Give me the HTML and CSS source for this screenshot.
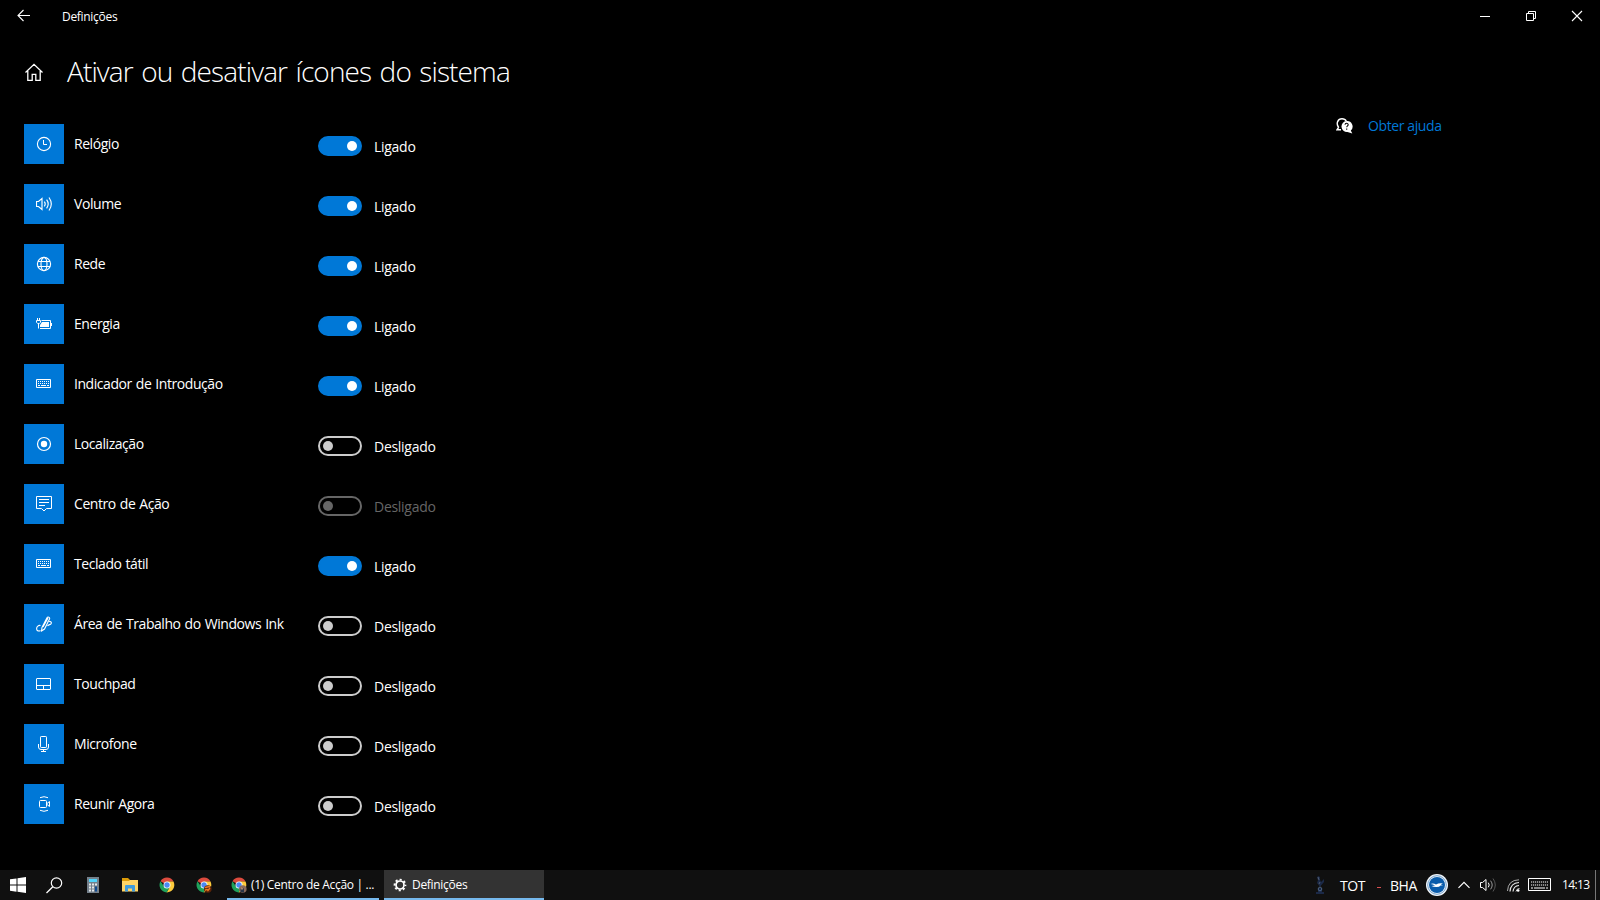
FILE: index.html
```html
<!DOCTYPE html>
<html lang="pt">
<head>
<meta charset="utf-8">
<title>Definições</title>
<link rel="stylesheet" href="styles.css">
</head>
<body>
<svg class="defs" width="0" height="0">
  <symbol id="keyboard" viewBox="0 0 16 16"><path d="M.5 3.5h14v8H.5z" fill="none" stroke="#fff"/><path d="M2 5.5h11M2 7.500h11" stroke="#fff" stroke-dasharray="1 1" fill="none"/><path d="M2 9.500h2M5 9.500h5M11 9.500h2" stroke="#fff"/></symbol>
  <symbol id="chrome" viewBox="0 0 16 16"><path d="M8 8 1.500 4.300A7.400 7.400 0 0 1 14.500 4.500L8 4.700z" fill="#dd4b3e"/><path d="M8 4.600h6.500A7.400 7.400 0 0 1 7.600 15.400L11 9.500z" fill="#fdcb3c"/><path d="M1.500 4.300A7.400 7.400 0 0 0 7.600 15.400L10.800 9.700 5 9.500z" fill="#1fa15c"/><circle cx="8" cy="8" r="3.500" fill="#fff"/><circle cx="8" cy="8" r="2.700" fill="#4a8af4"/></symbol>
</svg>
<div class="window">
  <header class="titlebar">
    <svg class="back" width="14" height="14" viewBox="0 0 14 14"><path d="M13 6.500H1M6.500 1 1 6.500 6.500 12" fill="none" stroke="#fff" stroke-width="1.100"/></svg>
    <span class="app-name">Definições</span>
    <div class="controls">
      <svg width="46" height="32"><path d="M18 16.500h10" stroke="#fff"/></svg>
      <svg width="46" height="32"><path d="M18.500 13.500h7v7h-7zM20.500 13v-1.500h7v7H26" fill="none" stroke="#fff"/></svg>
      <svg width="46" height="32"><path d="m18 11 10 10M28 11 18 21" stroke="#fff" stroke-width="1.100"/></svg>
    </div>
  </header>
  <div class="heading">
    <svg class="home" width="20" height="20" viewBox="0 0 20 20"><path d="M1.500 10.500 10 2.300l8.500 8.200M3.800 9v9.300h4.400v-6h3.600v6h4.400V9" fill="none" stroke="#fff" stroke-width="1.300"/></svg>
    <h1>Ativar ou desativar ícones do sistema</h1>
  </div>
  <main class="content">
    <ul class="settings">
      <li class="row"><span class="tile"><svg width="16" height="16"><circle cx="8" cy="8" r="6.600" fill="none" stroke="#fff" stroke-width="1.100"/><path d="M7.500 4v4.500H11" fill="none" stroke="#fff"/></svg></span><span class="label">Relógio</span><i class="toggle on"></i><span class="state">Ligado</span></li>
      <li class="row"><span class="tile"><svg width="16" height="16" fill="none" stroke="#fff" stroke-width="1.150"><path d="M.500 5.500h2l3.500-3v11l-3.500-3h-2zM8.300 5.700q1.800 2.300 0 4.600M10.600 3.700q3.200 4.300 0 8.600M13 1.500q4.600 6.500 0 13"/></svg></span><span class="label">Volume</span><i class="toggle on"></i><span class="state">Ligado</span></li>
      <li class="row"><span class="tile"><svg width="16" height="16" fill="none" stroke="#fff" stroke-width="1.150"><circle cx="8" cy="8" r="6.600"/><ellipse cx="8" cy="8" rx="3" ry="6.600"/><path d="M2 5.500h12M2 10.500h12"/></svg></span><span class="label">Rede</span><i class="toggle on"></i><span class="state">Ligado</span></li>
      <li class="row"><span class="tile"><svg width="16" height="16" fill="none" stroke="#fff"><path d="M1.500 2v2M3.500 2v2M.500 4.500h4v1.800L3.300 7.500H1.700L.500 6.300zM2.500 7.500V12.500M5.500 4.500h9v8H4M15.500 7v3"/><path d="M6 6h7v5H4V9z" fill="#fff" stroke="none"/></svg></span><span class="label">Energia</span><i class="toggle on"></i><span class="state">Ligado</span></li>
      <li class="row"><span class="tile"><svg width="16" height="16"><use href="#keyboard"/></svg></span><span class="label">Indicador de Introdução</span><i class="toggle on"></i><span class="state">Ligado</span></li>
      <li class="row"><span class="tile"><svg width="16" height="16"><circle cx="8" cy="8" r="6.500" fill="none" stroke="#fff" stroke-width="1.200"/><circle cx="8" cy="8" r="3.200" fill="#fff"/></svg></span><span class="label">Localização</span><i class="toggle"></i><span class="state">Desligado</span></li>
      <li class="row disabled"><span class="tile"><svg width="16" height="16" fill="none" stroke="#fff"><path d="M.500.500h15v12h-5L8 15l-2.500-2.500h-5zM3 3.500h10M3 6.500h10M3 9.500h6"/></svg></span><span class="label">Centro de Ação</span><i class="toggle"></i><span class="state">Desligado</span></li>
      <li class="row"><span class="tile"><svg width="16" height="16"><use href="#keyboard"/></svg></span><span class="label">Teclado tátil</span><i class="toggle on"></i><span class="state">Ligado</span></li>
      <li class="row"><span class="tile"><svg width="16" height="16" fill="none" stroke="#fff" stroke-width="1.100"><path d="M4.500 9.500C2.500 9 .600 10.500.600 12.700c0 2.300 2.500 3 3.800 1.600M5.500 15l.500-3.500L11 1.800c.8-1.500 3.200-.5 2.500 1.200L8.500 13zM7 11 12 2M11.500 5.500c3-.8 4.400.8 3.600 2.200-.7 1.300-2.500.5-3.600 2.300"/></svg></span><span class="label">Área de Trabalho do Windows Ink</span><i class="toggle"></i><span class="state">Desligado</span></li>
      <li class="row"><span class="tile"><svg width="16" height="16" fill="none" stroke="#fff"><rect x=".5" y="2.500" width="14" height="11" rx=".5"/><path d="M1 9.500h13M7.500 10v3.500"/></svg></span><span class="label">Touchpad</span><i class="toggle"></i><span class="state">Desligado</span></li>
      <li class="row"><span class="tile"><svg width="16" height="16" fill="none" stroke="#fff"><rect x="4.500" y=".5" width="6" height="11" rx=".7"/><path d="M2.500 8v3q0 2.500 2.500 2.500h5q2.500 0 2.500-2.500V8M7.500 13.500v2M5 15.500h5"/></svg></span><span class="label">Microfone</span><i class="toggle"></i><span class="state">Desligado</span></li>
      <li class="row"><span class="tile"><svg width="16" height="16" fill="none" stroke="#fff"><rect x="3.500" y="4.500" width="7" height="7" rx="1"/><path d="m11 7.500 2.500-2v5l-2.500-2M4 1.700q4-2 8 0M4 14.300q4 2 8 0"/></svg></span><span class="label">Reunir Agora</span><i class="toggle"></i><span class="state">Desligado</span></li>
    </ul>
    <a class="help"><svg width="17" height="16" viewBox="0 0 17 16"><path d="M2.600 9.200C-.300 5.500 1.800.800 6 .800c2 0 3.500.900 4.300 2.500M2.800 9 1 11.800H5" fill="none" stroke="#fff" stroke-width="1.400"/><path d="M10.500 3a5.500 5.500 0 1 0 1 11l4.800 1.500-1.500-3A5.500 5.500 0 0 0 10.500 3z" fill="#fff"/><path d="M9 6.800q.2-1.600 1.700-1.500 1.500.2 1.500 1.500c0 1-1.500 1.200-1.500 2.500M10.700 10.500v1.200" fill="none" stroke="#000" stroke-width="1.100"/></svg><span>Obter ajuda</span></a>
  </main>
</div>
<footer class="taskbar">
  <svg class="start" width="16" height="16"><path d="M0 2.300 6.500 1.400v6.200H0zM7.500 1.200 16 0v7.600H7.500zM0 8.500h6.500v6.200L0 13.800zM7.500 8.500H16V16l-8.500-1.200z" fill="#fff"/></svg>
  <svg class="search" width="17" height="17"><circle cx="10.500" cy="6" r="5.200" fill="none" stroke="#fff" stroke-width="1.200"/><path d="M6.800 9.700.500 16" stroke="#fff" stroke-width="1.300"/></svg>
  <svg class="calc" width="12" height="16"><path d="M0 0h12v16H0z" fill="#74808b"/><path d="M2 2h8v3H2z" fill="#50d4fb"/><path d="M2 7.500h5M2 10.500h5M2 13.500h5" stroke="#e4e8eb" stroke-width="2" stroke-dasharray="2 1"/><path d="M8 6.500h2v2H8z" fill="#e4e8eb"/><path d="M8 9.500h2v5H8z" fill="#104a91"/></svg>
  <svg class="folder" width="16" height="14"><path d="M0 0h6l2 2v2H0z" fill="#dc9b08"/><path d="M0 3h7l1-1h8v11.500H0z" fill="#ffd466"/><path d="M3 13.500V8q0-1 1-1h8q1 0 1 1v5.500h-3v-3H6v3z" fill="#409bdc"/></svg>
  <svg class="browser" width="16" height="16"><use href="#chrome"/></svg>
  <svg class="browser second" width="16" height="16"><use href="#chrome"/><circle cx="11.800" cy="12" r="3.800" fill="#5a2408"/><path d="M9 10.500l5-1M9 13.500q2-2 3 0l2-2.500" fill="none" stroke="#ee7620" stroke-width="1.400"/></svg>
  <div class="task browser-task">
    <svg width="16" height="16"><use href="#chrome"/><circle cx="11.800" cy="12" r="3.800" fill="#8b6b5c"/><path d="M9.500 15v-3l2-2 1.500 2v3.500" fill="#293548"/><path d="M11 10.500v2" stroke="#d6a17c" stroke-width="1.500"/></svg><span>(1) Centro de Acção | ...</span>
  </div>
  <div class="task active">
    <svg width="14" height="14" fill="none" stroke="#fff"><circle cx="7" cy="7" r="4" stroke-width="1.700"/><circle cx="7" cy="7" r="5.400" stroke-width="1.900" stroke-dasharray="2.120 2.120" stroke-dashoffset="1.060"/></svg><span>Definições</span>
  </div>
  <div class="tray">
    <svg class="rooster" width="10" height="19"><path d="M3 0l2 1v3l1 2 3-3v3L6 9.500 5 12 4 9.500 2 7l1-3-1-2zM3 12h4v4H3zM1 16h8v2H1z" fill="#1b2947"/><circle cx="5" cy="13" r="1.800" fill="none" stroke="#58708f" stroke-width=".8"/><path d="m3 1 1 3M5 6 4 8" stroke="#66717f" stroke-width=".7"/></svg>
    <span class="team home-team">TOT</span><i class="dash"></i><span class="team">BHA</span>
    <svg class="badge" width="22" height="22"><circle cx="11" cy="11" r="11" fill="#f3f7fb"/><circle cx="11" cy="11" r="9.300" fill="none" stroke="#3978b5" stroke-width=".7"/><circle cx="11" cy="11" r="8" fill="#0a5cab"/><path d="M4.500 10q3-1 5.500.6 3-2 7-1.200-1.500.4-2.200 1l2.200.8-2.500.2q-1 1.700-4 1.700-3.500-.2-5-1l3.500-.5Q7 10.300 4.500 10z" fill="#fff"/></svg>
    <svg class="chevron" width="12" height="8"><path d="M.500 6.800 6 1.300l5.500 5.500" fill="none" stroke="#fff" stroke-width="1.200"/></svg>
    <svg class="speaker" width="17" height="16" fill="none" stroke="#fff"><path d="M.500 5.500h2l3.500-3v11l-3.500-3h-2zM8.300 5.700q1.800 2.300 0 4.600"/><path d="M10.600 3.700q3.200 4.300 0 8.600" stroke="#999"/><path d="M13 1.500q4.600 6.500 0 13" stroke="#555"/></svg>
    <svg class="wifi" width="13" height="13" fill="none" stroke="#e8e8e8"><path d="M.500 12Q1 1 12 .800" stroke="#aaa"/><path d="M3 12.500Q3.500 4 12 3.500M6 12.500Q6.500 7 12 6.500" stroke-width="1.200"/><path d="M9 12.500q.5-3 3.500-3" stroke="#ccc"/><circle cx="11.200" cy="11.500" r="1.300" fill="#fff" stroke="none"/></svg>
    <svg class="touch" width="23" height="14"><path d="M.500.500h22v12H.500z" fill="none" stroke="#fff"/><path d="M3 4h17M3 7h17" stroke="#fff" stroke-width="1.200" stroke-dasharray="1.200 .8"/><path d="M3 10h2M6 10h11M18 10h2" stroke="#fff"/></svg>
    <span class="clock">14:13</span>
    <i class="peek"></i>
  </div>
</footer>
</body>
</html>
```
FILE: styles.css
```css
* { box-sizing: border-box; }
html, body { margin: 0; }
body {
  width: 1600px; height: 900px; overflow: hidden;
  display: flex; flex-direction: column;
  background: #000; color: #fff;
  font-family: "Open Sans", "Noto Sans", sans-serif; font-size: 14px;
}
svg { display: block; flex: none; }
.defs { position: absolute; }
span, h1 { white-space: nowrap; }
.window { flex: 1; }
.titlebar { display: flex; align-items: flex-start; height: 32px; padding-left: 17px; }
.back { margin-top: 9px; }
.app-name { margin-left: 31px; line-height: 16px; padding-top: 9px; font-size: 12px; letter-spacing: -.3px; }
.controls { display: flex; margin-left: auto; }
.heading { display: flex; height: 92px; padding: 21px 0 0 24px; }
.home { margin-top: 9px; }
h1 { margin: 0 0 0 23px; font-size: 28px; line-height: 36px; font-weight: 330; letter-spacing: -.88px; word-spacing: 2px; }
.content { display: flex; justify-content: space-between; padding-left: 24px; }
.settings { list-style: none; margin: 0; padding: 0; display: grid; gap: 20px; }
.row { display: grid; grid-template-columns: 50px 244px 56px auto; height: 40px; line-height: 20px; }
.tile { width: 40px; height: 40px; background: #0078d7; display: grid; place-items: center; }
.label { padding-top: 10px; letter-spacing: -.44px; word-spacing: .8px; }
.state { padding-top: 13px; letter-spacing: -.28px; }
.toggle { width: 44px; height: 20px; margin-top: 12px; border: 2px solid #ccc; border-radius: 10px; padding: 3px; display: flex; }
.toggle::before { content: ""; width: 10px; height: 10px; border-radius: 50%; background: #ccc; }
.toggle.on { background: #0078d7; border-color: #0078d7; justify-content: flex-end; }
.toggle.on::before { background: #fff; }
.disabled .toggle { border-color: #666; }
.disabled .toggle::before { background: #666; }
.disabled .state { color: #666; }
.help { display: flex; width: 264px; height: 20px; margin-top: -8px; color: #0078d7; line-height: 20px; letter-spacing: -.4px; }
.help svg { margin: 2px 15px 0 0; }
.taskbar { display: flex; height: 30px; background: #101010; align-items: flex-start; font-size: 12px; }
.start { margin: 7px 0 0 10px; }
.search { margin: 7px 0 0 20px; }
.calc { margin: 7px 0 0 24px; }
.folder { margin: 8px 0 0 23px; }
.browser { margin: 7px 0 0 21px; }
.second { margin-left: 21px; }
.task { display: flex; align-items: center; height: 30px; line-height: 16px; border-bottom: 2px solid #76b9ed; padding-top: 2px; letter-spacing: -.3px; }
.browser-task { width: 152px; margin-left: 15px; padding-left: 4px; gap: 4px; }
.active { width: 160px; margin-left: 5px; background: #333; padding-left: 9px; gap: 5px; }
.tray { display: flex; margin-left: auto; height: 30px; }
.rooster { margin-top: 6px; }
.team { font-size: 14px; line-height: 20px; padding-top: 6px; letter-spacing: -.4px; }
.home-team { margin-left: 15px; width: 37px; }
.dash { width: 4px; height: 1px; margin: 17px 9px 0 0; background: #d75050; }
.badge { margin: 4px 0 0 9px; }
.chevron { margin: 11px 0 0 10px; }
.speaker { margin: 7px 0 0 10px; }
.wifi { margin: 9px 0 0 10px; }
.touch { margin: 8px 0 0 8px; }
.clock { margin-left: 11px; width: 33px; line-height: 16px; padding-top: 7px; letter-spacing: -.6px; }
.peek { width: 5px; border-left: 1px solid #777; }
```
